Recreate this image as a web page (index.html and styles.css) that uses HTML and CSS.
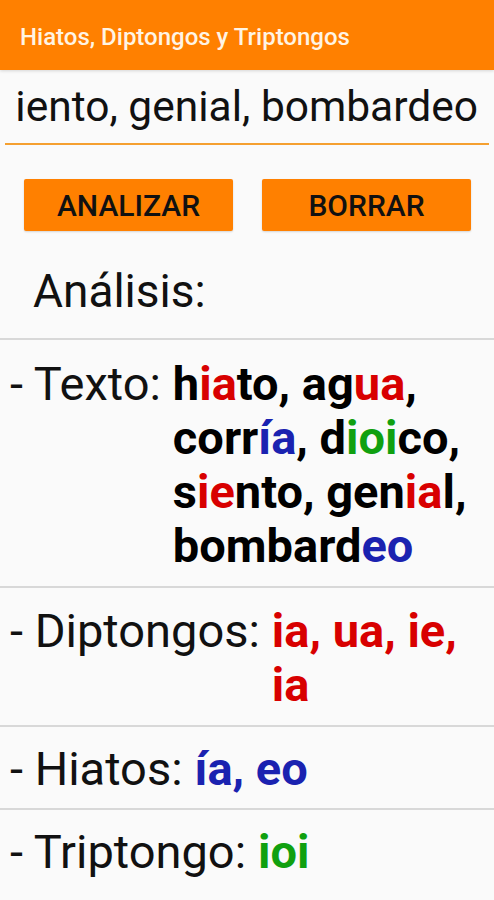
FILE: index.html
```html
<!DOCTYPE html>
<html lang="es">
<head>
<meta charset="utf-8">
<link rel="stylesheet" href="styles.css">
</head>
<body>
<header class="appbar">Hiatos, Diptongos y Triptongos</header>
<div class="field"><div class="field-clip"><span class="field-text">hiato, agua, corría, dioico, siento, genial, bombardeo</span></div></div>
<div class="buttons">
  <button class="btn">ANALIZAR</button>
  <button class="btn">BORRAR</button>
</div>
<div class="heading">Análisis:</div>
<section class="row">
  <span class="label">- Texto:</span>
  <span class="value">h<span class="r">ia</span>to, ag<span class="r">ua</span>, corr<span class="b">ía</span>, d<span class="g">ioi</span>co, s<span class="r">ie</span>nto, gen<span class="r">ia</span>l, bombard<span class="b">eo</span></span>
</section>
<section class="row">
  <span class="label">- Diptongos:</span>
  <span class="value r">ia, ua, ie, ia</span>
</section>
<section class="row">
  <span class="label">- Hiatos:</span>
  <span class="value b">ía, eo</span>
</section>
<section class="row last">
  <span class="label">- Triptongo:</span>
  <span class="value g">ioi</span>
</section>
</body>
</html>
```
FILE: styles.css
```css
html, body {
  margin: 0;
  padding: 0;
  background: #fafafa;
  font-family: Roboto, "Noto Sans", sans-serif;
  color: #111;
}
.appbar {
  height: 70px;
  background: #ff8000;
  color: #fff4e4;
  font-size: 24px;
  font-weight: 500;
  display: flex;
  align-items: center;
  padding: 3px 20px 0;
  box-sizing: border-box;
  box-shadow: 0 1px 3px rgba(0,0,0,0.15);
}
.field {
  margin: 12px 5px 0;
  padding: 0 11px 12px 11px;
  border-bottom: 2px solid #f5a030;
  font-size: 42.5px;
  color: #111;
}
.field-clip {
  height: 49px;
  line-height: 49px;
  display: flex;
  justify-content: flex-end;
  overflow: hidden;
  white-space: nowrap;
}
.buttons {
  display: flex;
  gap: 29px;
  padding: 34px 23px 0 24px;
}
.btn {
  flex: 1;
  height: 52px;
  border: none;
  border-radius: 2px;
  background: #ff8000;
  color: #111;
  font-family: Roboto, sans-serif;
  font-size: 30px;
  font-weight: 500;
  padding: 0;
  box-shadow: 0 1px 2px rgba(0,0,0,0.15);
}
.heading {
  font-size: 46px;
  line-height: 54px;
  padding: 33px 0 20px 33px;
  border-bottom: 2px solid #d8d8d8;
}
.row {
  display: flex;
  align-items: flex-start;
  font-size: 47px;
  line-height: 54px;
  padding: 17px 10px 13px 10px;
  border-bottom: 2px solid #d8d8d8;
}
.row + .row { padding-top: 16px; }
.row + .row + .row { padding-top: 15px; padding-bottom: 12px; }
.row.last { border-bottom: none; }
.label {
  white-space: nowrap;
  padding-right: 12px;
}
.value {
  font-weight: 700;
  color: #000;
}
.r { color: #d80000; }
.b { color: #1a22b0; }
.g { color: #10a010; }
```
